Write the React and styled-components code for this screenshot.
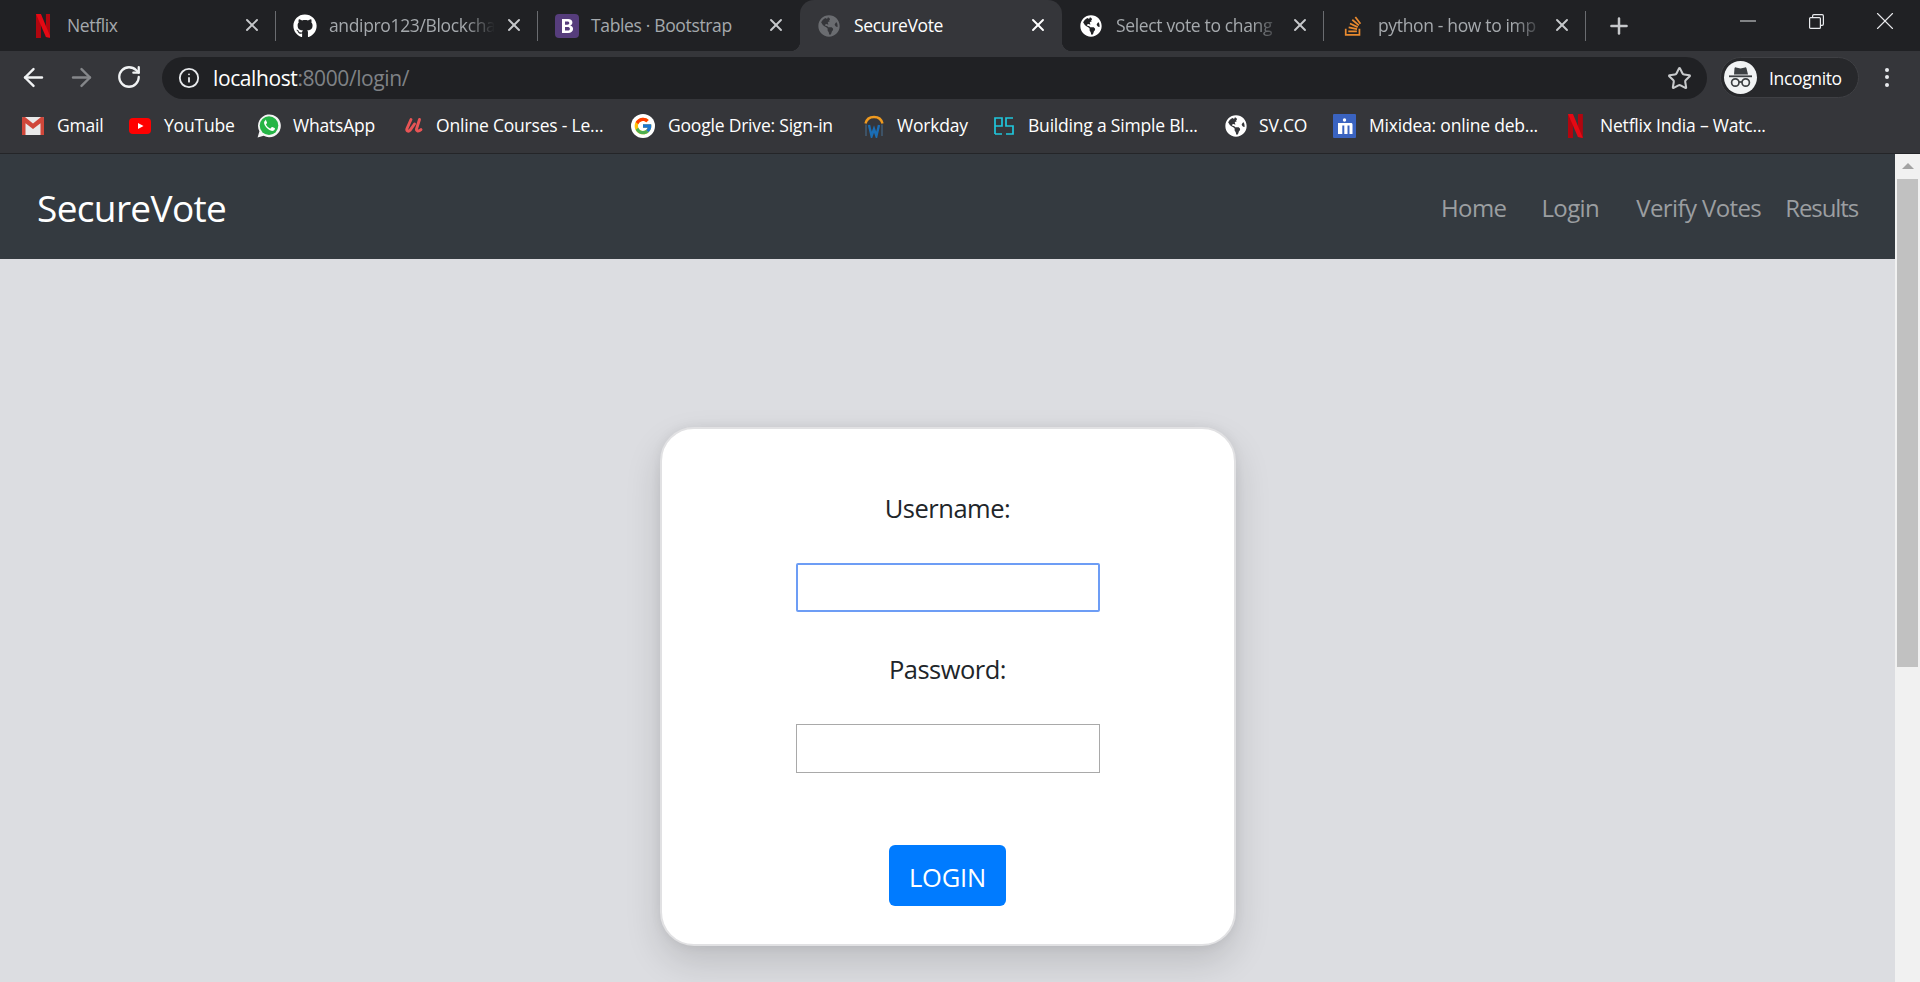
import React from "react";
import styled, { createGlobalStyle } from "styled-components";
import { ArrowLeft, ArrowRight, RotateCw, Star, Info, Plus, X, Minus } from "lucide-react";
import { FaGithub, FaGlobeAmericas, FaStackOverflow } from "react-icons/fa";
import { FcGoogle } from "react-icons/fc";

const Global = createGlobalStyle`
  html, body { margin: 0; height: 100%; overflow: hidden; background: #dcdde1; }
  * { box-sizing: border-box; }
  body { font-family: "Open Sans", "Noto Sans", sans-serif; }
`;

const Shell = styled.div`
  width: 1920px; height: 982px; display: flex; flex-direction: column; overflow: hidden;
`;

/* ---------- Tab strip ---------- */
const TabStrip = styled.div`
  height: 51px; flex: none; background: #202124; display: flex; align-items: stretch; padding-left: 14px;
`;
const Tab = styled.div`
  position: relative; width: 262px; flex: none; display: flex; align-items: center;
  padding-left: 17px;
  background: ${p => p.$active ? "#35363a" : "transparent"};
  border-radius: ${p => p.$active ? "14px 14px 0 0" : "0"};
  color: ${p => p.$active ? "#ffffff" : "#a5a9ad"};
  ${p => p.$active ? `
    &::before, &::after { content: ""; position: absolute; bottom: 0; width: 10px; height: 10px; }
    &::before { left: -10px; background: radial-gradient(circle at 0 0, transparent 10px, #35363a 10.5px); }
    &::after { right: -10px; background: radial-gradient(circle at 100% 0, transparent 10px, #35363a 10.5px); }
  ` : ""}
`;
const TabSeparator = styled.i`
  position: absolute; right: 0; top: 11px; height: 30px; width: 1px; background: #6a6c70;
`;
const TabIcon = styled.span`
  width: 24px; height: 24px; flex: none; display: flex; align-items: center; justify-content: center;
`;
const TabTitle = styled.span`
  margin-left: ${p => p.$gap}px; margin-bottom: 2px; width: 166px; font-size: 17.5px; letter-spacing: -0.35px; white-space: nowrap;
  ${p => p.$fade ? `-webkit-mask-image: linear-gradient(90deg, #000 82%, transparent 100%); mask-image: linear-gradient(90deg, #000 82%, transparent 100%);` : ""}
`;
const TabClose = styled.span`
  position: absolute; left: 228px; top: 15px; width: 20px; height: 20px; display: flex; align-items: center; justify-content: center;
  color: ${p => p.$active ? "#ffffff" : "#c6c8cb"};
`;
const NewTab = styled.div`
  width: 66px; display: flex; align-items: center; justify-content: center; color: #c6c8cb; flex: none;
`;
const WindowControls = styled.div`
  margin-left: auto; padding-right: 1px; display: flex; align-items: flex-start; color: #e8eaed;
`;
const WindowButton = styled.div`
  width: ${p => p.$w || 68}px; height: 42px; display: flex; align-items: center; justify-content: center;
`;

/* ---------- Toolbar ---------- */
const Toolbar = styled.div`
  height: 48px; flex: none; background: #35363a; display: flex; align-items: center; padding-left: 15px; padding-top: 6px;
`;
const NavIcon = styled.span`
  width: 36px; height: 36px; margin-right: ${p => p.$mr}px; margin-top: -2px; display: flex; align-items: center; justify-content: center; color: ${p => p.$dim ? "#85878a" : "#f1f3f4"};
`;
const Omnibox = styled.div`
  margin-left: 15px; width: 1545px; height: 42px; border-radius: 21px; background: #202124; display: flex; align-items: center; padding-left: 16px; padding-right: 15px; flex: none;
`;
const OmniIcon = styled.span`
  width: 22px; height: 22px; display: flex; align-items: center; justify-content: center; color: #e8eaed; flex: none;
`;
const UrlText = styled.span`
  margin-left: 13px; font-size: 21px; letter-spacing: -0.4px; color: #7f8286; white-space: nowrap;
`;
const UrlHost = styled.span`color: #ffffff;`;
const StarWrap = styled.span`
  margin-left: auto; color: #c8cacc; display: flex; align-items: center;
`;
const Profile = styled.div`
  margin-left: 13px; margin-top: -1px; width: 139px; height: 41px; border-radius: 21px; background: #27282b; border: 1px solid #3f4044; display: flex; align-items: center; padding-left: 3px; flex: none;
`;
const Avatar = styled.span`
  width: 33px; height: 33px; border-radius: 50%; background: #f1f3f4; display: flex; align-items: center; justify-content: center; flex: none;
`;
const ProfileName = styled.span`
  margin-left: 12px; font-size: 17.5px; letter-spacing: -0.35px; color: #fff;
`;
const MenuDots = styled.div`
  margin-left: 26px; margin-top: -2px; display: flex; flex-direction: column; gap: 3.5px; align-items: center;
`;
const Dot = styled.i`
  width: 4px; height: 4px; border-radius: 50%; background: #e8eaed; display: block;
`;

/* ---------- Bookmarks ---------- */
const BookmarkBar = styled.div`
  height: 55px; flex: none; background: #35363a; border-bottom: 1px solid #242528; display: flex; align-items: center; padding-left: 22px;
`;
const Bookmark = styled.div`
  width: ${p => p.$w}px; flex: none; display: flex; align-items: center; color: #fff;
`;
const BookmarkIcon = styled.span`
  width: ${p => p.$iw || 22}px; height: 24px; flex: none; display: flex; align-items: center; justify-content: center;
`;
const GoogleBadge = styled.span`
  width: 24px; height: 24px; border-radius: 50%; background: #fff; display: flex; align-items: center; justify-content: center;
`;
const BookmarkLabel = styled.span`
  margin-left: ${p => p.$gap || 13}px; margin-bottom: 2px; font-size: 17.5px; letter-spacing: -0.2px; white-space: nowrap;
`;

/* ---------- Page ---------- */
const Viewport = styled.div`
  flex: 1; min-height: 0; display: flex;
`;
const Page = styled.main`
  flex: 1; min-width: 0; background: #dcdde1; display: flex; flex-direction: column; align-items: center;
`;
const Navbar = styled.nav`
  align-self: stretch; height: 105px; flex: none; background: #343a40; display: flex; align-items: center; padding: 2px 37px 0;
`;
const Brand = styled.span`
  color: #fff; font-size: 37px; letter-spacing: -0.65px; line-height: 1;
`;
const NavLinks = styled.div`
  margin-left: auto; display: flex; align-items: center;
`;
const NavLink = styled.a`
  color: #9b9ea1; font-size: 24px; letter-spacing: ${p => p.$ls ?? -0.6}px; margin-left: ${p => p.$ml || 0}px; white-space: nowrap;
`;
const Card = styled.form`
  margin-top: 168px; width: 576px; height: 519px; flex: none; background: #fff; border: 2px solid #e1e1e3; border-radius: 34px;
  box-shadow: 0 16px 36px rgba(0,0,0,.14), 0 0 12px rgba(0,0,0,.06);
  display: flex; flex-direction: column; align-items: center; padding-top: 61px;
`;
const Label = styled.label`
  font-size: 25.5px; line-height: 36px; letter-spacing: -0.5px; color: #212529; height: 36px;
`;
const Input = styled.div`
  width: 304px; height: 49px; flex: none; margin-top: 37px; margin-bottom: ${p => p.$mb}px; background: #fff;
  border: ${p => p.$focus ? "2px solid #6d9df5" : "1px solid #a9a9a9"}; border-radius: ${p => p.$focus ? "2px" : "0"};
`;
const Button = styled.button`
  width: 117px; height: 61px; background: #007bff; color: #fff; border: none; border-radius: 6px; font-family: inherit; font-size: 25.5px; letter-spacing: -0.2px; padding: 2px 0 0;
`;
const ScrollTrack = styled.div`
  width: 25px; flex: none; background: #f1f1f1; display: flex; flex-direction: column; align-items: center; padding-top: 9px;
`;
const ScrollArrow = styled.i`
  width: 0; height: 0; border-left: 6px solid transparent; border-right: 6px solid transparent; border-bottom: 6px solid #a3a3a3; display: block;
`;
const ScrollThumb = styled.div`
  width: 21px; height: 488px; margin-top: 10px; background: #c1c1c1;
`;

/* ---------- Drawn icons ---------- */
const NetflixN = ({ s = 24 }) => (
  <svg width={s * 0.62} height={s} viewBox="0 0 15 24">
    <path d="M0 0h5v24l-5 .8z" fill="#b1060f" /><path d="M10 0h5v24l-5-.8z" fill="#b1060f" />
    <path d="M0 0h5l10 24-5-.8z" fill="#e50914" />
  </svg>
);
const GlobeIcon = ({ c = "#fff", s = 22 }) => <FaGlobeAmericas size={s} color={c} />;
const BootstrapIcon = () => (
  <svg width="24" height="24" viewBox="0 0 24 24">
    <rect width="24" height="24" rx="4" fill="#563d7c" />
    <path d="M7 5h6.2c2.6 0 4.2 1.3 4.2 3.4 0 1.5-.9 2.6-2.2 3 1.8.3 2.9 1.6 2.9 3.4 0 2.5-1.9 4.2-5 4.2H7zm3 2.4v3.3h2.2c1.4 0 2.1-.6 2.1-1.7s-.7-1.6-2-1.6zm0 5.5v3.7h2.6c1.5 0 2.3-.7 2.3-1.9s-.9-1.8-2.5-1.8z" fill="#fff" fillRule="evenodd" />
  </svg>
);
const GmailIcon = () => (
  <svg width="22" height="18" viewBox="0 0 22 18">
    <rect width="22" height="18" rx="1.5" fill="#e9e9e9" />
    <path d="M0 1.5C0 .6.6 0 1.5 0H3l8 6.5L19 0h1.5c.9 0 1.5.6 1.5 1.5V18h-3.5V6.2L11 12 3.5 6.2V18H0z" fill="#d0473a" />
  </svg>
);
const YoutubeIcon = () => (
  <svg width="22" height="16" viewBox="0 0 22 16">
    <rect width="22" height="16" rx="4" fill="#f00" /><path d="M9 5l5.5 3L9 11z" fill="#fff" />
  </svg>
);
const WhatsappIcon = () => (
  <svg width="24" height="24" viewBox="0 0 24 24">
    <path d="M.6 23.6l1.8-6.3A11.4 11.4 0 1 1 6.7 21.7z" fill="#f4f4f4" />
    <circle cx="12" cy="11.6" r="9.3" fill="#25b546" />
    <path d="M8.3 6.5c-.7.5-1.4 1.5-1.2 2.8.3 2.6 4.4 7.4 8 7.6 1.3 0 2.5-1 2.8-2 .1-.4 0-.6-.3-.8l-2.3-1.1c-.3-.1-.5 0-.7.2l-.9 1.1c-.2.2-.4.2-.7.1-1.6-.7-3-2-3.9-3.6-.1-.3-.1-.5.1-.7l.7-.9c.2-.2.2-.4.1-.7l-1-2.3c-.2-.4-.4-.4-.7-.4z" fill="#fff" />
  </svg>
);
const UdemyIcon = () => (
  <svg width="22" height="18" viewBox="0 0 22 18" fill="none" stroke="#e95455" strokeLinecap="round" strokeLinejoin="round">
    <path d="M8 2.5 4 11.5c-.9 2.600 1.400 3.600 3 1.800l4.500-6.300" strokeWidth="2.900" />
    <path d="M16.500 2.500 13.500 12c-.5 2.200 2 2.800 4.500.6" strokeWidth="2.900" />
  </svg>
);
const WorkdayIcon = () => (
  <svg width="22" height="24" viewBox="0 0 22 24" fill="none">
    <path d="M2.500 9.500C3.500 5.200 7 3 11 3s7.500 2.200 8.500 6.500" stroke="#ef9a1f" strokeWidth="2.400" />
    <path d="M3 10.500V22M19 10.500V22" stroke="#3d5266" strokeWidth="2" />
    <path d="M6 11l2.600 11 2.400-7 2.400 7L16 11" stroke="#1a6db4" strokeWidth="2.400" />
  </svg>
);
const BlockgeeksIcon = () => (
  <svg width="20" height="18" viewBox="0 0 20 18" fill="none" stroke="#1fc6dc" strokeWidth="1.700">
    <path d="M1 17V1h7v8H1M1 17h7" /><path d="M19 1h-7v8h7v8h-7" />
  </svg>
);
const MixideaIcon = () => (
  <svg width="23" height="24" viewBox="0 0 23 24">
    <rect width="23" height="24" rx="1" fill="#3a63c0" />
    <path d="M5 9h13c1 0 1.500.6 1.500 1.500V20h-3v-8.500h-2V20h-3.200v-8.500h-2V20H5z" fill="#fff" />
    <circle cx="11.500" cy="6" r="1.700" fill="#fff" />
  </svg>
);
const IncognitoIcon = () => (
  <svg width="25" height="21" viewBox="0 0 25 21" fill="none">
    <path d="M6.500 1.200c.2-.7.8-1 1.500-.8l4.500 1 4.500-1c.7-.2 1.300.1 1.500.8l1.500 6.300h-14z" fill="#3c4043" />
    <rect x="1" y="8.400" width="23" height="1.800" fill="#3c4043" />
    <circle cx="7.300" cy="15.500" r="3.700" stroke="#3c4043" strokeWidth="1.700" />
    <circle cx="17.700" cy="15.500" r="3.700" stroke="#3c4043" strokeWidth="1.700" />
    <path d="M11 15h3" stroke="#3c4043" strokeWidth="1.700" />
  </svg>
);
const RestoreIcon = () => (
  <svg width="15" height="15" viewBox="0 0 15 15" fill="none" stroke="#e8eaed" strokeWidth="1.200">
    <rect x=".6" y="3.600" width="10.800" height="10.800" rx="1" /><path d="M3.600 3.400V1.900A1.300 1.300 0 0 1 4.900.6h8.200a1.300 1.300 0 0 1 1.300 1.300v8.200a1.300 1.300 0 0 1-1.300 1.300h-1.500" />
  </svg>
);

const tabs = [
  { title: "Netflix", icon: <NetflixN />, sep: true, gap: 12 },
  { title: "andipro123/Blockcha", icon: <FaGithub size={24} color="#fff" />, sep: true, fade: true, gap: 12 },
  { title: "Tables · Bootstrap", icon: <BootstrapIcon />, gap: 12 },
  { title: "SecureVote", icon: <GlobeIcon c="#6a6c70" />, active: true, gap: 13 },
  { title: "Select vote to chang", icon: <GlobeIcon />, sep: true, fade: true, gap: 13 },
  { title: "python - how to imp", icon: <FaStackOverflow size={22} color="#e98a2f" />, sep: true, fade: true, gap: 13 },
];

const bookmarks = [
  { label: "Gmail", icon: <GmailIcon />, w: 107 },
  { label: "YouTube", icon: <YoutubeIcon />, w: 128 },
  { label: "WhatsApp", icon: <WhatsappIcon />, iw: 24, gap: 12, w: 146 },
  { label: "Online Courses - Le...", icon: <UdemyIcon />, gap: 11, w: 228 },
  { label: "Google Drive: Sign-in", icon: <GoogleBadge><FcGoogle size={20} /></GoogleBadge>, iw: 24, gap: 13, w: 232 },
  { label: "Workday", icon: <WorkdayIcon />, gap: 12, w: 131 },
  { label: "Building a Simple Bl...", icon: <BlockgeeksIcon />, iw: 20, gap: 14, w: 231 },
  { label: "SV.CO", icon: <GlobeIcon />, gap: 12, w: 108 },
  { label: "Mixidea: online deb...", icon: <MixideaIcon />, iw: 23, w: 235 },
  { label: "Netflix India – Watc...", icon: <NetflixN s={24} />, iw: 15, gap: 17, w: 200 },
];

export default function App() {
  return (
    <Shell>
      <Global />
      <TabStrip>
        {tabs.map(t => (
          <Tab key={t.title} $active={t.active}>
            <TabIcon>{t.icon}</TabIcon>
            <TabTitle $gap={t.gap} $fade={t.fade}>{t.title}</TabTitle>
            <TabClose $active={t.active}><X size={22} strokeWidth={2.3} /></TabClose>
            {t.sep && <TabSeparator />}
          </Tab>
        ))}
        <NewTab><Plus size={26} strokeWidth={2.3} /></NewTab>
        <WindowControls>
          <WindowButton><Minus size={26} strokeWidth={0.9} /></WindowButton>
          <WindowButton $w={69}><RestoreIcon /></WindowButton>
          <WindowButton><X size={30} strokeWidth={0.9} /></WindowButton>
        </WindowControls>
      </TabStrip>

      <Toolbar>
        <NavIcon $mr={12}><ArrowLeft size={29} strokeWidth={2} /></NavIcon>
        <NavIcon $mr={12} $dim><ArrowRight size={29} strokeWidth={2} /></NavIcon>
        <NavIcon $mr={0}><RotateCw size={26} strokeWidth={2.1} /></NavIcon>
        <Omnibox>
          <OmniIcon><Info size={22} strokeWidth={2} /></OmniIcon>
          <UrlText><UrlHost>localhost</UrlHost>:8000/login/</UrlText>
          <StarWrap><Star size={25} strokeWidth={2} /></StarWrap>
        </Omnibox>
        <Profile>
          <Avatar><IncognitoIcon /></Avatar>
          <ProfileName>Incognito</ProfileName>
        </Profile>
        <MenuDots><Dot /><Dot /><Dot /></MenuDots>
      </Toolbar>

      <BookmarkBar>
        {bookmarks.map(b => (
          <Bookmark key={b.label} $w={b.w}>
            <BookmarkIcon $iw={b.iw}>{b.icon}</BookmarkIcon>
            <BookmarkLabel $gap={b.gap}>{b.label}</BookmarkLabel>
          </Bookmark>
        ))}
      </BookmarkBar>

      <Viewport>
        <Page>
          <Navbar>
            <Brand>SecureVote</Brand>
            <NavLinks>
              <NavLink>Home</NavLink>
              <NavLink $ml={35}>Login</NavLink>
              <NavLink $ml={37}>Verify Votes</NavLink>
              <NavLink $ml={24} $ls={-1.1}>Results</NavLink>
            </NavLinks>
          </Navbar>
          <Card>
            <Label>Username:</Label>
            <Input $focus $mb={39} />
            <Label>Password:</Label>
            <Input $mb={72} />
            <Button type="button">LOGIN</Button>
          </Card>
        </Page>
        <ScrollTrack>
          <ScrollArrow />
          <ScrollThumb />
        </ScrollTrack>
      </Viewport>
    </Shell>
  );
}
